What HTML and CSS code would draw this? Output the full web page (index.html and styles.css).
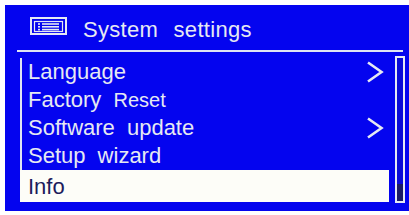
FILE: index.html
```html
<!DOCTYPE html>
<html>
<head>
<meta charset="utf-8">
<link rel="stylesheet" href="styles.css">
</head>
<body>
<div class="panel">
  <div class="header">
    <svg class="icon" width="37" height="18" viewBox="0 0 37 18">
      <rect x="1" y="1" width="35" height="16" fill="none" stroke="#e4e8f4" stroke-width="2"/>
      <rect x="4.5" y="4.5" width="28" height="10" fill="none" stroke="#e4e8f4" stroke-width="1.2"/>
      <rect x="8" y="6.2" width="2" height="1.6" fill="#e4e8f4"/>
      <rect x="8" y="9" width="2" height="1.6" fill="#e4e8f4"/>
      <rect x="8" y="11.8" width="2" height="1.6" fill="#e4e8f4"/>
      <rect x="12" y="6.2" width="17" height="1.6" fill="#e4e8f4"/>
      <rect x="12" y="9" width="17" height="1.6" fill="#e4e8f4"/>
      <rect x="12" y="11.8" width="17" height="1.6" fill="#e4e8f4"/>
    </svg>
    <span class="title">System settings</span>
  </div>
  <div class="content">
    <div class="list">
      <div class="row"><span>Language</span>
        <svg class="chev" width="18" height="24" viewBox="0 0 18 24"><polyline points="2,2.5 15.5,12 2,21.5" fill="none" stroke="#e6e9f2" stroke-width="2.6"/></svg>
      </div>
      <div class="row"><span>Factory <span class="small">Reset</span></span></div>
      <div class="row"><span>Software update</span>
        <svg class="chev" width="18" height="24" viewBox="0 0 18 24"><polyline points="2,2.5 15.5,12 2,21.5" fill="none" stroke="#e6e9f2" stroke-width="2.6"/></svg>
      </div>
      <div class="row"><span>Setup wizard</span></div>
      <div class="row selected"><span>Info</span></div>
    </div>
    <div class="scrollbar"><div class="thumb"></div></div>
  </div>
</div>
</body>
</html>
```
FILE: styles.css
```css
html, body {
  margin: 0;
  padding: 0;
  background: #ffffff;
}
body {
  font-family: "Liberation Sans", Arial, sans-serif;
  width: 409px;
  height: 215px;
  overflow: hidden;
}
.panel {
  margin: 5px 0 0 5px;
  width: 404px;
  height: 206px;
  background: #0404ef;
  padding-top: 12px;
  box-sizing: border-box;
}
.header {
  display: flex;
  align-items: flex-start;
  height: 35px;
  box-sizing: border-box;
  margin: 0 6px 0 12px;
  padding-left: 13px;
  border-bottom: 2px solid #dfe4f3;
}
.icon {
  display: block;
}
.title {
  margin-left: 16px;
  margin-top: 2px;
  font-size: 22px;
  line-height: 22px;
  color: #e6e9f2;
  word-spacing: 9px;
  letter-spacing: 0.3px;
}
.content {
  display: flex;
  margin: 6px 4px 0 15px;
}
.list {
  flex: 1;
}
.row {
  display: flex;
  justify-content: space-between;
  align-items: center;
  height: 28px;
  border-left: 2px solid #dfe4f3;
  padding: 0 5px 0 6px;
  font-size: 22px;
  line-height: 28px;
  color: #e6e9f2;
  word-spacing: 6px;
}
.small {
  font-size: 20px;
}
.chev {
  display: block;
}
.row.selected {
  height: 32px;
  border-left: none;
  padding: 2px 0 0 8px;
  box-sizing: border-box;
  background: #fdfdf8;
  color: #1c1c5c;
}
.scrollbar {
  margin-left: 6px;
  margin-top: -2px;
  width: 10px;
  height: 147px;
  box-sizing: border-box;
  border: 2px solid #e6e9f4;
  background: #0a0ad8;
  display: flex;
  flex-direction: column;
  justify-content: flex-end;
}
.thumb {
  height: 17px;
  background: #1a1a66;
}
```
